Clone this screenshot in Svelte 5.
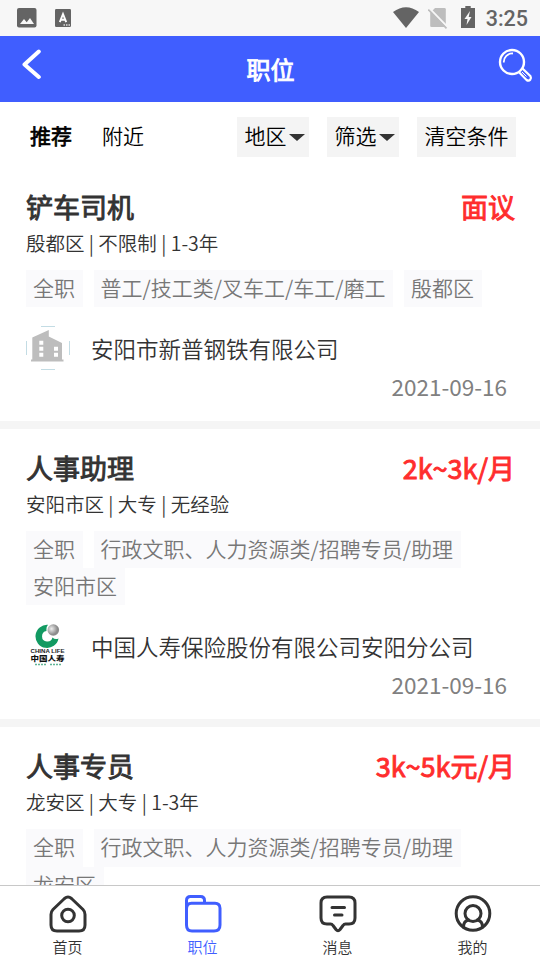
<script>
	const jobs = [
		{
			title: '铲车司机',
			salary: '面议',
			info: '殷都区 | 不限制 | 1-3年',
			tags: ['全职', '普工/技工类/叉车工/车工/磨工', '殷都区'],
			company: '安阳市新普钢铁有限公司',
			logo: 'default',
			date: '2021-09-16'
		},
		{
			title: '人事助理',
			salary: '2k~3k/月',
			info: '安阳市区 | 大专 | 无经验',
			tags: ['全职', '行政文职、人力资源类/招聘专员/助理', '安阳市区'],
			company: '中国人寿保险股份有限公司安阳分公司',
			logo: 'chinalife',
			date: '2021-09-16'
		},
		{
			title: '人事专员',
			salary: '3k~5k元/月',
			info: '龙安区 | 大专 | 1-3年',
			tags: ['全职', '行政文职、人力资源类/招聘专员/助理', '龙安区'],
			company: '',
			logo: '',
			date: ''
		}
	];

	const tabs = [
		{ id: 'home', label: '首页' },
		{ id: 'job', label: '职位' },
		{ id: 'message', label: '消息' },
		{ id: 'mine', label: '我的' }
	];

	let active = 'job';
	let sort = '推荐';
</script>

<div class="page">
	<div class="status">
		<svg class="pic" width="20" height="20" viewBox="0 0 20 20">
			<rect width="19.5" height="19.5" rx="2" fill="#646464" />
			<path d="M3 16l4-5 2.700 3.200L13 10l4 6z" fill="#f7f7f7" />
		</svg>
		<svg class="input" width="16" height="18" viewBox="0 0 16 18">
			<rect width="16" height="18" rx="1.2" fill="#646464" />
			<path d="M4.800 13.200L8 5l3.200 8.200M5.800 10.700h4.400" fill="none" stroke="#fff" stroke-width="1.900" />
			<path d="M8.500 16h1.500M11 16h1.500M13.500 16h1.500" stroke="#ddd" stroke-width="1.300" />
		</svg>
		<svg class="wifi" width="26" height="21" viewBox="0 0 26 21">
			<path d="M0 5Q13-4.600 26 5L13 21z" fill="#646464" />
		</svg>
		<svg class="sim" width="20" height="22" viewBox="0 0 20 22">
			<path d="M7 1h9.500q1.300 0 1.300 1.300V20H3.500q-1.300 0-1.300-1.300V6z" fill="#bdbdbd" />
			<path d="M1 1L19.500 20" stroke="#f7f7f7" stroke-width="2" />
			<path d="M.3 2.500L18.500 21.300" stroke="#bdbdbd" stroke-width="1.700" />
		</svg>
		<svg class="battery" width="14" height="22" viewBox="0 0 14 22">
			<path d="M4.300 0h5.400v2H14v20H0V2h4.300z" fill="#646464" />
			<path d="M9 5L3.500 13h3L5.500 19l5-8H7.700z" fill="#f7f7f7" />
		</svg>
		<span class="time">3:25</span>
	</div>

	<header>
		<svg class="back" width="20" height="31" viewBox="0 0 20 31">
			<path d="M17.800 2.500L3.500 15.500l14.300 12.500" fill="none" stroke="#fff" stroke-width="4" stroke-linecap="round" stroke-linejoin="round" />
		</svg>
		<h1>职位</h1>
		<svg class="search" width="35" height="35" viewBox="0 0 35 35" fill="none" stroke="#fff">
			<circle cx="14" cy="14" r="12" stroke-width="2.400" />
			<path d="M5.800 14.500A8.500 8.500 0 0 1 15 5.500" stroke-width="1.800" />
			<path d="M20.800 24L28.500 32q2.300 1.500 3.700-.2t.3-3.600L24.500 20.500" stroke-width="2.200" />
			<path d="M24 24l4.500 4.500" stroke-width="1" />
		</svg>
	</header>

	<div class="filters">
		<span class="sort" class:current={sort === '推荐'}>推荐</span>
		<span class="sort" class:current={sort === '附近'}>附近</span>
		<div class="buttons">
			<div class="btn">地区<i class="caret"></i></div>
			<div class="btn">筛选<i class="caret"></i></div>
			<div class="btn">清空条件</div>
		</div>
	</div>

	<main>
		{#each jobs as job}
			<section class="job">
				<div class="head">
					<h2>{job.title}</h2>
					<span class="salary">{job.salary}</span>
				</div>
				<div class="info">{job.info}</div>
				<div class="tags">
					{#each job.tags as tag}
						<span class="tag">{tag}</span>
					{/each}
				</div>
				{#if job.company}
					<div class="company">
						{#if job.logo === 'default'}
							<svg width="44" height="44" viewBox="0 0 44 44">
								<path d="M15 .5h14M15 43.500h14M.5 15v14M43.500 15v14" stroke="#c3dce4" stroke-width="1" />
								<path d="M5 35.600V33.500H6.300V11.500L22.800 4v6.500L36 17V33.500h1.500v2.100z" fill="#bdbdbd" />
								<path d="M13.300 14.700h4v4h-4zM13.300 20.700h4v4h-4zM13.300 26.700h4v4h-4zM28 20.700h4v4h-4zM28 26.700h4v4h-4z" fill="#fff" />
							</svg>
						{:else}
							<svg width="44" height="44" viewBox="0 0 44 44">
								<defs>
									<radialGradient id="ball" cx=".35" cy=".4">
										<stop offset="0" stop-color="#eee" />
										<stop offset="1" stop-color="#8c8c8c" />
									</radialGradient>
								</defs>
								<path d="M22 .8A11.600 11.600 0 1 0 32.500 14.500Q29 16 26.500 13.500A5.300 5.300 0 1 1 20.500 7Q20 3 22 .8z" fill="#129a62" />
								<circle cx="27.300" cy="6" r="5.800" fill="url(#ball)" />
								<text x="4.500" y="28.800" textLength="34" lengthAdjust="spacingAndGlyphs" class="en">CHINA LIFE</text>
								<text x="4.500" y="36.500" textLength="34" lengthAdjust="spacingAndGlyphs" class="cn">中国人寿</text>
								<path d="M9 40.500h12M24 40.500h11" stroke="#62b596" stroke-width="1.600" stroke-dasharray="2 1" />
							</svg>
						{/if}
						<span>{job.company}</span>
					</div>
					<div class="date">{job.date}</div>
				{/if}
			</section>
		{/each}
	</main>

	<nav>
		{#each tabs as tab}
			<div class="tab" class:active={tab.id === active}>
				<svg width="38" height="38" viewBox="0 0 38 38" fill="none" stroke="currentColor" stroke-width="3" stroke-linecap="round" stroke-linejoin="round">
					{#if tab.id === 'home'}
						<path d="M15.500 3.500q3.500-3 7 0L34 14.500q2 2 2 5V30q0 6-6 6H8q-6 0-6-6V19.500q0-3 2-5z" />
						<circle cx="19" cy="20.500" r="6.300" />
					{:else if tab.id === 'job'}
						<path d="M2.500 15V5.500q0-4 4-4h10q4 0 4 4v2.700H31q5 0 5 5V30q0 6-6 6H8q-5.500 0-5.500-6V14q0-5.800 5-5.800h13" />
					{:else if tab.id === 'message'}
						<path d="M8 2h22q6 0 6 6v15q0 6-6 6h-3.500q-1.500 0-2.500 1.500l-3 4q-2 2.500-4 0l-3-4Q13 29 11.500 29H8q-6 0-6-6V8q0-6 6-6z" />
						<path d="M13 12.500h12.500M15.500 20h7.500" />
					{:else}
						<circle cx="19" cy="18.500" r="16.800" />
						<circle cx="19" cy="18.500" r="8" />
						<path d="M9.500 32q0-6 5-7M28.500 32q0-6-5-7" />
					{/if}
				</svg>
				<span>{tab.label}</span>
			</div>
		{/each}
	</nav>
</div>

<style>
	.page {
		display: flex;
		flex-direction: column;
		height: 960px;
		overflow: hidden;
		background: #fff;
		color: #333;
		font-family: 'Noto Sans CJK SC', sans-serif;
		font-weight: 350;
	}

	svg {
		display: block;
		flex: none;
	}

	.status {
		flex: none;
		display: flex;
		align-items: center;
		height: 36px;
		padding: 0 12px 0 17px;
		box-sizing: border-box;
		background: #f7f7f7;
	}

	.input {
		margin-left: 18px;
	}

	.wifi {
		margin: 0 9px 2px auto;
	}

	.battery {
		margin: 0 11px 2px 13px;
	}

	.time {
		font: 500 21.5px Roboto, sans-serif;
		line-height: 36px;
		color: #646464;
		padding-top: 2px;
	}

	header {
		flex: none;
		display: flex;
		justify-content: space-between;
		height: 66px;
		padding: 0 7px 0 21px;
		box-sizing: border-box;
		background: #405eff;
		color: #fff;
	}

	.back {
		margin: 13px 15px 0 0;
	}

	h1 {
		margin: 0;
		padding-right: 13px;
		font-size: 24px;
		font-weight: 400;
		line-height: 65px;
		-webkit-text-stroke: 0.9px;
	}

	.search {
		margin-top: 12px;
	}

	.filters {
		flex: none;
		display: flex;
		align-items: center;
		gap: 30px;
		height: 65.5px;
		padding: 4px 24px 0 30px;
		box-sizing: border-box;
		font-size: 21px;
		color: #000;
	}

	.sort {
		padding-bottom: 3px;
	}

	.current {
		font-weight: 400;
		-webkit-text-stroke: 0.7px;
	}

	.buttons {
		display: flex;
		gap: 18px;
		margin-left: auto;
	}

	.btn {
		display: flex;
		align-items: center;
		height: 40px;
		padding: 0 7.5px 3px;
		box-sizing: border-box;
		background: #f4f4f4;
	}

	.caret {
		margin: 4px -3px 0 2px;
		border: 8px solid transparent;
		border-top: 7px solid #333;
		border-bottom: 0;
	}

	main {
		flex: 1;
		min-height: 0;
		overflow: hidden;
	}

	.job {
		padding: 19px 25px 17.5px 26px;
		border-bottom: 8px solid #f5f5f5;
	}

	.head {
		display: flex;
		justify-content: space-between;
		font-size: 27px;
		font-weight: 400;
		line-height: 40px;
		-webkit-text-stroke: 0.9px;
	}

	h2 {
		margin: 0;
		font-size: 27px;
		font-weight: 400;
	}

	.salary {
		color: #ff2d2d;
	}

	.info {
		margin-top: 1px;
		font-size: 19.5px;
		line-height: 29px;
	}

	.tags {
		display: flex;
		flex-wrap: wrap;
		column-gap: 10.5px;
		margin-top: 13px;
	}

	.tag {
		height: 37.25px;
		padding: 0 8px 0 7px;
		font-size: 21px;
		line-height: 35px;
		box-sizing: border-box;
		color: #777;
		background: #fafafc;
	}

	.company {
		display: flex;
		align-items: center;
		gap: 21px;
		margin-top: 19px;
		font-size: 22.5px;
		line-height: 44px;
	}

	.en {
		font: 700 4.5px 'Liberation Sans', sans-serif;
		fill: #222;
	}

	.cn {
		font-size: 7px;
		font-weight: 900;
		fill: #111;
	}

	.date {
		height: 33.5px;
		padding-right: 8px;
		font-size: 22.5px;
		font-weight: 400;
		line-height: 33.5px;
		text-align: right;
		color: #808080;
	}

	nav {
		flex: none;
		display: flex;
		height: 75px;
		border-top: 1px solid #c8c8c8;
		box-sizing: border-box;
		background: #fff;
	}

	.tab {
		flex: 1;
		display: flex;
		flex-direction: column;
		align-items: center;
		padding-top: 9px;
		font-size: 15px;
		line-height: 27px;
	}

	.tab.active {
		color: #405eff;
	}
</style>
